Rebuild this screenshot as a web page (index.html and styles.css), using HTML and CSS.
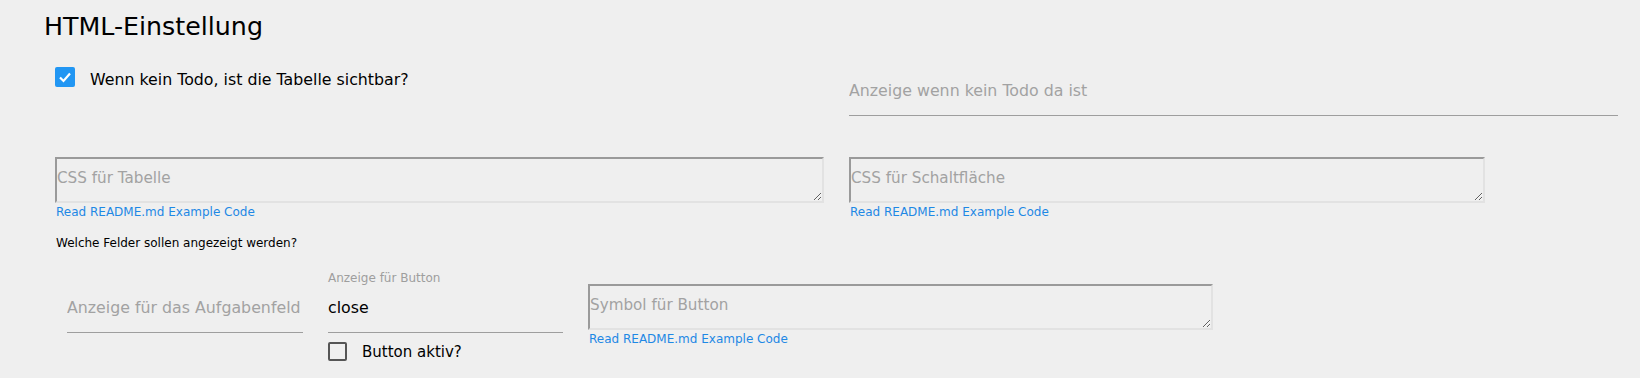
FILE: index.html
```html
<!DOCTYPE html>
<html>
<head>
    <meta charset="utf-8">
    <link rel="stylesheet" href="styles.css">
</head>
<body>
    <div class="page">
        <h2 class="page-title">HTML-Einstellung</h2>

        <div class="row row-top">
            <div class="col col-left">
                <label class="check">
                    <span class="check-box checked">
                        <svg width="20" height="20" viewBox="0 0 20 20"><polyline points="5,10.5 8.5,14 15,6.5" fill="none" stroke="#fff" stroke-width="2.2"/></svg>
                    </span>
                    <span class="check-label">Wenn kein Todo, ist die Tabelle sichtbar?</span>
                </label>
            </div>
            <div class="col col-right field-offset">
                <input class="line-input" type="text" placeholder="Anzeige wenn kein Todo da ist">
            </div>
        </div>

        <div class="row row-css">
            <div class="col col-left">
                <textarea class="code-area" placeholder="CSS für Tabelle"></textarea>
                <a class="hint-link" href="#">Read README.md Example Code</a>
            </div>
            <div class="col col-right">
                <textarea class="code-area area-short" placeholder="CSS für Schaltfläche"></textarea>
                <a class="hint-link" href="#">Read README.md Example Code</a>
            </div>
        </div>

        <p class="fields-title">Welche Felder sollen angezeigt werden?</p>

        <div class="row row-fields">
            <div class="field field-task">
                <input class="line-input" type="text" placeholder="Anzeige für das Aufgabenfeld">
            </div>
            <div class="field field-button">
                <span class="float-label">Anzeige für Button</span>
                <input class="line-input" type="text" value="close">
                <label class="check check-small">
                    <span class="check-box"></span>
                    <span class="check-label">Button aktiv?</span>
                </label>
            </div>
            <div class="field field-symbol">
                <textarea class="code-area" placeholder="Symbol für Button"></textarea>
                <a class="hint-link" href="#">Read README.md Example Code</a>
            </div>
        </div>
    </div>
</body>
</html>
```

FILE: styles.css
```css
body {
    margin: 0;
    background-color: #efefef;
    font-family: "DejaVu Sans", sans-serif;
    color: #000;
}

.page {
    padding-top: 12px;
}

.page-title {
    margin: 0 0 0 44px;
    font-size: 25.3px;
    font-weight: normal;
    line-height: 30px;
}

.row {
    display: flex;
    gap: 25px;
    margin-left: 55px;
}

.row-top {
    margin-top: 25px;
}

.col-left,
.col-right {
    width: 769px;
}

.field-offset {
    padding-top: 7px;
}

.check {
    display: flex;
    align-items: flex-start;
    gap: 15px;
}

.check-box {
    width: 20px;
    height: 20px;
    box-sizing: border-box;
    border: 2px solid #555;
    border-radius: 2px;
    flex-shrink: 0;
}

.check-box.checked {
    background-color: #2196f3;
    border: none;
}

.check-box svg {
    display: block;
}

.check-label {
    font-size: 15.8px;
    line-height: 20px;
    padding-top: 3px;
}

.line-input {
    display: block;
    width: 100%;
    box-sizing: border-box;
    height: 42px;
    padding: 7px 0 16px;
    border: none;
    border-bottom: 1px solid #9e9e9e;
    background: transparent;
    font-family: "DejaVu Sans", sans-serif;
    font-size: 15.8px;
    line-height: 18px;
    color: #000;
    outline: none;
}

.line-input::placeholder {
    color: #a2a2a2;
}

.row-css {
    margin-top: 41px;
}

.code-area {
    display: block;
    width: 100%;
    height: 46px;
    box-sizing: border-box;
    margin: 0;
    padding: 10px 0 0;
    border-width: 2px;
    border-style: solid;
    border-color: #9a9a9a #e2e2e2 #e2e2e2 #9a9a9a;
    border-radius: 0;
    background: transparent;
    font-family: "DejaVu Sans", sans-serif;
    font-size: 15.2px;
    line-height: 18px;
    outline: none;
}

.code-area::placeholder {
    color: #a2a2a2;
}

.area-short {
    width: 636px;
}

.hint-link {
    display: block;
    margin-top: 1px;
    padding-left: 1px;
    font-size: 12px;
    line-height: 16px;
    color: #1e88e5;
    text-decoration: none;
}

.fields-title {
    margin: 15px 0 0 56px;
    font-size: 12px;
    line-height: 16px;
}

.row-fields {
    margin-top: 19px;
}

.field-task {
    width: 236px;
    margin-left: 12px;
    padding-top: 21px;
}

.field-button {
    width: 235px;
}

.float-label {
    display: block;
    margin-bottom: 5px;
    font-size: 12px;
    line-height: 16px;
    color: #9e9e9e;
}

.check-small {
    margin-top: 9px;
}

.check-small .check-box {
    width: 19px;
    height: 19px;
}

.check-small .check-label {
    font-size: 15px;
    padding-top: 0;
}

.field-symbol {
    width: 625px;
    padding-top: 14px;
}
```
